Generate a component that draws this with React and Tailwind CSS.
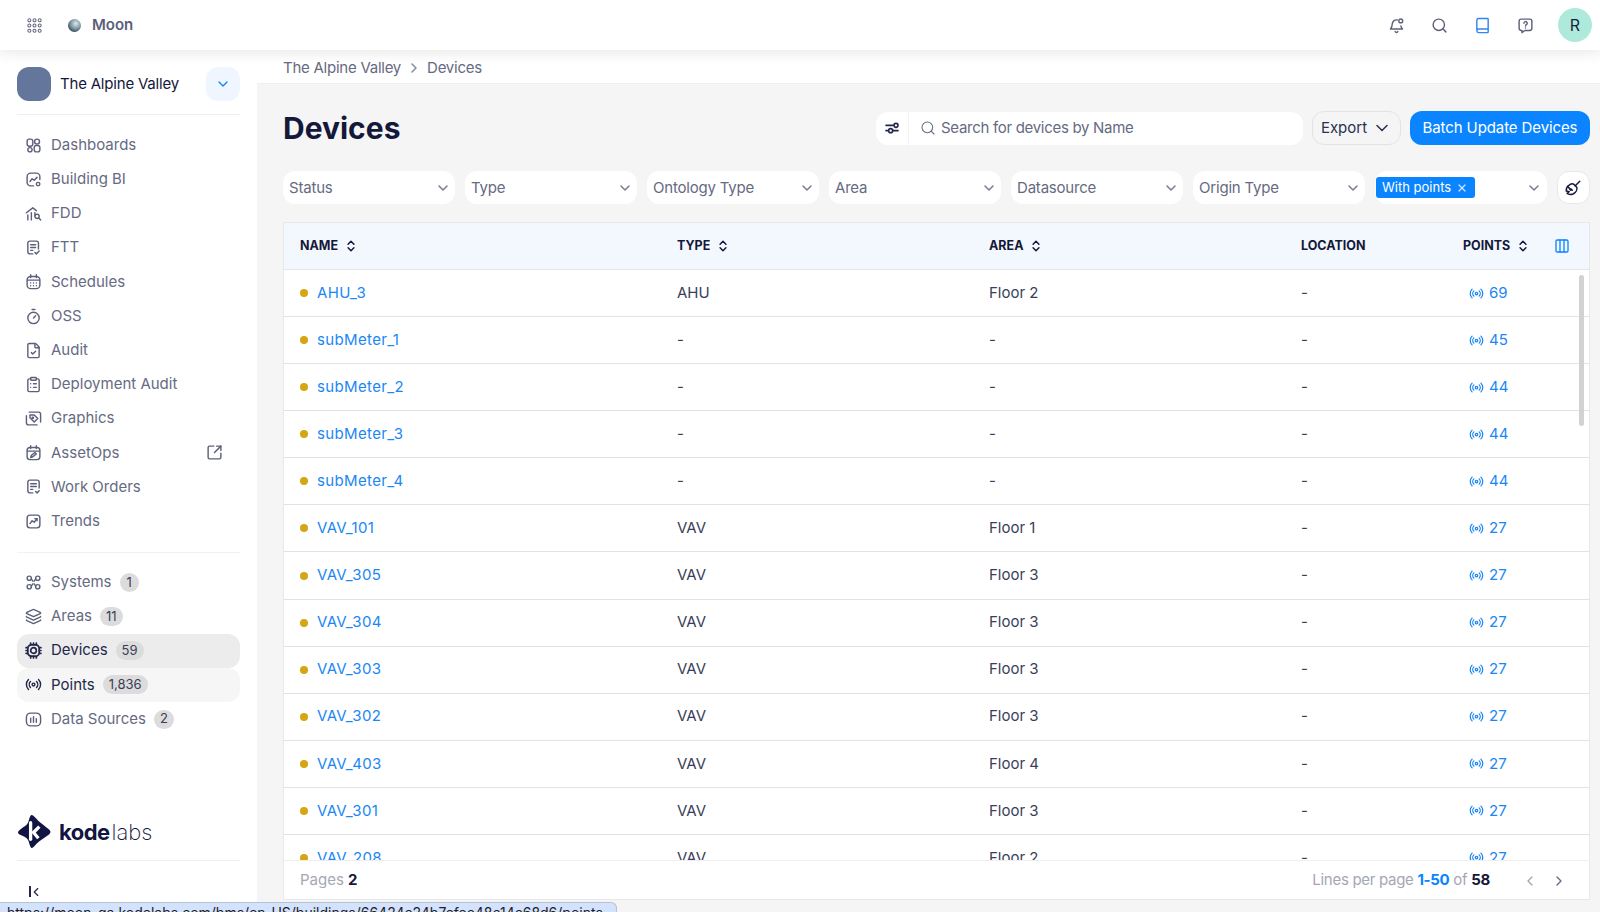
import {
  Book,
  ChevronDown,
  ChevronLeft,
  ChevronRight,
  ChevronsUpDown,
  ClipboardList,
  Columns3,
  FileCheck,
  Layers,
  Radio,
  Search,
  SquareArrowOutUpRight,
  Timer,
  X,
} from "lucide-react";

const svgProps = {
  viewBox: "0 0 24 24",
  fill: "none",
  stroke: "currentColor",
  strokeWidth: 2,
  strokeLinecap: "round",
  strokeLinejoin: "round",
};

const Dashboards = (p) => (
  <svg {...svgProps} {...p}>
    <rect x="3" y="3" width="8" height="10" rx="3" />
    <circle cx="17" cy="6.5" r="3.5" />
    <circle cx="7" cy="18" r="3" />
    <rect x="13" y="12" width="8" height="9" rx="3" />
  </svg>
);
const BuildingBi = (p) => (
  <svg {...svgProps} {...p}>
    <path d="M12 21H8a5 5 0 0 1-5-5V8a5 5 0 0 1 5-5h8a5 5 0 0 1 5 5v4" />
    <path d="M7 15l3-4 3 2 4-4" />
    <circle cx="18.5" cy="18.5" r="2.5" />
  </svg>
);
const Fdd = (p) => (
  <svg {...svgProps} {...p}>
    <path d="M2 11l9-7 5 4" />
    <path d="M4 14v7M9 11v10M14 11v4" />
    <circle cx="17" cy="16" r="3" />
    <path d="M19.5 18.5L22 21" />
  </svg>
);
const Ftt = (p) => (
  <svg {...svgProps} {...p}>
    <path d="M11 21H7a3 3 0 0 1-3-3V6a3 3 0 0 1 3-3h9a3 3 0 0 1 3 3v8" />
    <path d="M8 8h7M8 12h7M8 16h3" />
    <path d="M14 19l2 2 4-4" />
  </svg>
);
const Schedules = (p) => (
  <svg {...svgProps} {...p}>
    <rect x="3" y="5" width="18" height="17" rx="5" />
    <path d="M8 2.5v4M16 2.5v4M3.5 10h17" />
    <path d="M8 14h.01M12 14h.01M16 14h.01M8 18h.01M12 18h.01M16 18h.01" />
  </svg>
);
const Graphics = (p) => (
  <svg {...svgProps} {...p}>
    <path d="M6 3h13a3 3 0 0 1 3 3v11" />
    <path d="M2 8v10a3 3 0 0 0 3 3h12" />
    <path d="M7 7h6l5 5-5 5-6-6z" />
    <circle cx="11" cy="11" r="1" />
  </svg>
);
const AssetOps = (p) => (
  <svg {...svgProps} {...p}>
    <rect x="3" y="5" width="18" height="17" rx="4" />
    <path d="M8 2.5v4M16 2.5v4M3.5 10h17" />
    <path d="M8 19l1-3 5-4 2 2-5 4z" />
  </svg>
);
const WorkOrders = (p) => (
  <svg {...svgProps} {...p}>
    <path d="M11 21H7a3 3 0 0 1-3-3V6a3 3 0 0 1 3-3h10a3 3 0 0 1 3 3v8" />
    <path d="M8 8h8M8 12h8M8 16h3" />
    <path d="M15 19l2 2 3-3" />
  </svg>
);
const Trends = (p) => (
  <svg {...svgProps} {...p}>
    <rect x="3" y="3" width="18" height="18" rx="4" />
    <path d="M7 15l3-4 3 2 4-5" />
    <path d="M14 8h3v3" />
  </svg>
);
const Systems = (p) => (
  <svg {...svgProps} {...p}>
    <circle cx="6" cy="6" r="3" />
    <circle cx="18" cy="6" r="3" />
    <circle cx="6" cy="18" r="3" />
    <circle cx="18" cy="18" r="3" />
    <path d="M9 7l2 3M15 7l-2 3M9 17l2-3M15 17l-2-3" />
  </svg>
);
const Cpu = (p) => (
  <svg {...svgProps} strokeWidth={2.4} {...p}>
    <rect x="4" y="4" width="16" height="16" rx="5" />
    <circle cx="12" cy="12" r="4" />
    <path d="M8 1.5v2M12 1.5v2M16 1.5v2M8 20.5v2M12 20.5v2M16 20.5v2M1.5 8h2M1.5 12h2M1.5 16h2M20.5 8h2M20.5 12h2M20.5 16h2" />
  </svg>
);
const DataSources = (p) => (
  <svg {...svgProps} {...p}>
    <rect x="2" y="3" width="20" height="18" rx="6" />
    <path d="M8 10v6M12 8v8M16 11v5" />
  </svg>
);
const Grid9 = (p) => (
  <svg viewBox="0 0 16 16" fill="none" stroke="currentColor" strokeWidth="1.1" {...p}>
    {[2.5, 8, 13.5].map((y) =>
      [2.5, 8, 13.5].map((x) => <circle key={`${x}-${y}`} cx={x} cy={y} r="1.6" />)
    )}
  </svg>
);
const Sliders = (p) => (
  <svg {...svgProps} strokeWidth={2.4} {...p}>
    <path d="M3 8h11M3 16h3" />
    <circle cx="18" cy="8" r="3" />
    <circle cx="10" cy="16" r="3" />
    <path d="M13 16h8" />
  </svg>
);
const Broom = (p) => (
  <svg {...svgProps} {...p}>
    <path d="M21 3l-6 6" />
    <path d="M13 7l4 4c1 3-1 7-5 9-3 1-6 1-8-1l3-2-4-1c0-3 1-6 3-7 2-2 5-3 7-2z" />
    <path d="M9 13l2 2M6 11l3 4" />
  </svg>
);
const BellDot = (p) => (
  <svg {...svgProps} {...p}>
    <path d="M13 4.2A6 6 0 0 0 6 10c0 4-1.2 5.5-2.5 7h17c-1-1.2-1.9-2.3-2.3-4.5" />
    <path d="M10 20.5a2.2 2.2 0 0 0 4 0" />
    <circle cx="18" cy="5.5" r="2.7" />
  </svg>
);
const HelpChat = (p) => (
  <svg {...svgProps} {...p}>
    <path d="M6 3h12a3 3 0 0 1 3 3v10a3 3 0 0 1-3 3h-7l-4 3v-3H6a3 3 0 0 1-3-3V6a3 3 0 0 1 3-3z" />
    <path d="M9.8 8.8a2.3 2.3 0 1 1 3.4 2c-.8.5-1.2 1-1.2 1.8" />
    <path d="M12 15.6h.01" />
  </svg>
);
const KodeMark = (p) => (
  <svg viewBox="0 0 34 34" {...p}>
    <path
      d="M14 0c2 0 4 3 8 7l10 8c2 2 2 3 0 5l-10 7c-4 3-6 7-8 7-1 0-2-3-3-7-1-3-3-4-7-6-3-1-4-2-4-3s2-3 5-5c3-2 5-3 6-7 1-4 2-6 3-6z"
      fill="#121542"
    />
    <path d="M13 8v17" stroke="#fff" strokeWidth="3.4" strokeLinecap="round" />
    <path d="M22 12l-6 6 5 6" stroke="#fff" strokeWidth="3.4" fill="none" />
  </svg>
);

const mainNav = [
  { label: "Dashboards", icon: Dashboards },
  { label: "Building BI", icon: BuildingBi },
  { label: "FDD", icon: Fdd },
  { label: "FTT", icon: Ftt },
  { label: "Schedules", icon: Schedules },
  { label: "OSS", icon: Timer },
  { label: "Audit", icon: FileCheck },
  { label: "Deployment Audit", icon: ClipboardList },
  { label: "Graphics", icon: Graphics },
  { label: "AssetOps", icon: AssetOps, external: true },
  { label: "Work Orders", icon: WorkOrders },
  { label: "Trends", icon: Trends },
];

const subNav = [
  { label: "Systems", icon: Systems, count: "1" },
  { label: "Areas", icon: Layers, count: "11" },
  { label: "Devices", icon: Cpu, count: "59", state: "active" },
  { label: "Points", icon: Radio, count: "1,836", state: "hover" },
  { label: "Data Sources", icon: DataSources, count: "2" },
];

const filters = ["Status", "Type", "Ontology Type", "Area", "Datasource", "Origin Type"];

const devices = [
  ["AHU_3", "AHU", "Floor 2", "69"],
  ["subMeter_1", "-", "-", "45"],
  ["subMeter_2", "-", "-", "44"],
  ["subMeter_3", "-", "-", "44"],
  ["subMeter_4", "-", "-", "44"],
  ["VAV_101", "VAV", "Floor 1", "27"],
  ["VAV_305", "VAV", "Floor 3", "27"],
  ["VAV_304", "VAV", "Floor 3", "27"],
  ["VAV_303", "VAV", "Floor 3", "27"],
  ["VAV_302", "VAV", "Floor 3", "27"],
  ["VAV_403", "VAV", "Floor 4", "27"],
  ["VAV_301", "VAV", "Floor 3", "27"],
  ["VAV_208", "VAV", "Floor 2", "27"],
];

const NavItem = ({ item }) => {
  const Icon = item.icon;
  const strong = item.state === "active" || item.state === "hover";
  return (
    <div
      className={`h-[34.2px] flex items-center pl-[8px] pr-[17px] rounded-xl ${
        item.state === "active" ? "bg-[#ececec]" : item.state === "hover" ? "bg-[#f6f6f6]" : ""
      }`}
    >
      <Icon className={`w-[17px] h-[17px] shrink-0 ${strong ? "text-[#23274a]" : "text-[#5d6079]"}`} />
      <span className={`ml-[9px] text-[15px] ${strong ? "text-[#23274a]" : "text-[#666a82]"}`}>
        {item.label}
      </span>
      {item.count && (
        <span className="ml-2 h-[19px] min-w-[19px] px-[6px] flex items-center justify-center rounded-full bg-[#dcdcdc] text-[13px] text-[#3a3d57]">
          {item.count}
        </span>
      )}
      {item.external && (
        <SquareArrowOutUpRight className="ml-auto w-[17px] h-[17px] text-[#5d6079]" />
      )}
    </div>
  );
};

const HeaderCell = ({ label, sortable }) => (
  <div className="flex items-center gap-[6px] text-[12.5px] font-bold text-[#14183a]">
    {label}
    {sortable && <ChevronsUpDown className="w-[14px] h-[14px]" strokeWidth={2.6} />}
  </div>
);

const App = () => {
  return (
    <div
      className="h-screen w-full overflow-hidden flex flex-col bg-[#f5f5f5] relative"
      style={{ fontFamily: "Inter, 'Noto Sans', sans-serif" }}
    >
      {/* top bar */}
      <header className="h-[50px] shrink-0 bg-white flex items-center pl-[27px] pr-[8px] relative z-10 shadow-[0_2px_14px_rgba(0,0,0,0.1)]">
        <Grid9 className="w-[15px] h-[15px] text-[#62657d]" />
        <div className="ml-[26px] w-[13px] h-[13px] rounded-full bg-[radial-gradient(circle_at_60%_35%,#dfe9ec_0%,#7d97a3_45%,#1d3440_85%)]" />
        <span className="ml-[11px] text-[15px] font-semibold text-[#5b5f77]">Moon</span>
        <div className="ml-auto flex items-center">
          <BellDot className="w-[17px] h-[17px] text-[#5d6079]" />
          <Search className="ml-[26px] w-[17px] h-[17px] text-[#5d6079]" />
          <Book className="ml-[26px] w-[17px] h-[17px] text-[#2f86f0]" />
          <HelpChat className="ml-[26px] w-[17px] h-[17px] text-[#5d6079]" />
          <div className="ml-[24px] w-[34px] h-[34px] rounded-full bg-[#aeeadb] flex items-center justify-center text-[16px] text-[#1a1e3e]">
            R
          </div>
        </div>
      </header>

      <div className="flex-1 flex min-h-0">
        {/* sidebar */}
        <aside className="w-[257px] shrink-0 bg-white flex flex-col px-[17px] pt-[17px]">
          <div className="flex items-center pb-[13px] border-b border-[#eeeeee]">
            <div className="w-[34px] h-[34px] rounded-xl bg-[#64769b]" />
            <span className="ml-[9px] text-[15px] tracking-[-0.2px] text-[#14183a] pt-[1px]">
              The Alpine Valley
            </span>
            <div className="ml-auto w-[34px] h-[34px] rounded-xl bg-[#f0f6ff] flex items-center justify-center">
              <ChevronDown className="w-4 h-4 text-[#0a84ff]" />
            </div>
          </div>
          <nav className="mt-[13px] pb-[14px] border-b border-[#f2f2f2]">
            {mainNav.map((item) => (
              <NavItem key={item.label} item={item} />
            ))}
          </nav>
          <nav className="mt-[12px]">
            {subNav.map((item) => (
              <NavItem key={item.label} item={item} />
            ))}
          </nav>
          <div className="mt-auto">
            <div className="flex items-center pb-[12px] pl-[1px] border-b border-[#eeeeee]">
              <KodeMark className="w-[33px] h-[33px]" />
              <span className="ml-[8px] text-[22px] leading-none font-bold text-[#121542] tracking-tight">
                kode
              </span>
              <span className="ml-[2px] text-[22px] leading-none font-extralight text-[#121542]">
                labs
              </span>
            </div>
            <div className="h-[51px] flex items-start pt-[25px] pl-[12px]">
              <div className="w-[2px] h-[11px] bg-[#23274a]" />
              <ChevronLeft className="w-[14px] h-[14px] -ml-[2px] -mt-[1px] text-[#23274a]" />
            </div>
          </div>
        </aside>

        {/* main */}
        <main className="flex-1 min-w-0 flex flex-col">
          <div className="h-[34px] shrink-0 bg-white border-b border-[#efefef] flex items-center pl-[26px] pt-[3px] text-[15px] tracking-[-0.25px] text-[#666a82]">
            The Alpine Valley
            <ChevronRight className="mx-[5px] w-4 h-4 text-[#8b8ea0]" strokeWidth={2.4} />
            Devices
          </div>

          <div className="flex-1 min-h-0 flex flex-col pl-[26px] pr-[10px] pb-[12px]">
            <div className="mt-[27px] h-[34px] flex items-center">
              <h1 className="text-[30px] font-bold text-[#14183a]">Devices</h1>
              <div className="ml-auto w-[427px] h-[33px] bg-white rounded-xl flex items-center">
                <div className="w-[33px] h-full flex items-center justify-center border-r border-[#f3f3f3]">
                  <Sliders className="w-[16px] h-[16px] text-[#23274a]" />
                </div>
                <Search className="ml-[11px] w-[16px] h-[16px] text-[#666a82]" strokeWidth={1.6} />
                <span className="ml-[5px] text-[15px] tracking-[-0.3px] text-[#666a82]">
                  Search for devices by Name
                </span>
              </div>
              <button className="ml-[9px] w-[89px] h-[34px] rounded-xl border border-[#e3e3e3] flex items-center justify-center gap-[5px] text-[15px] text-[#2c3050]">
                Export
                <ChevronDown className="w-[20px] h-[20px]" strokeWidth={1.8} />
              </button>
              <button className="ml-[9px] w-[180px] h-[34px] rounded-xl bg-[#0a84ff] text-white text-[15px] tracking-[-0.1px]">
                Batch Update Devices
              </button>
            </div>

            <div className="mt-[26px] flex items-center gap-[10px]">
              {filters.map((name) => (
                <div
                  key={name}
                  className="w-[172px] h-[33px] bg-white rounded-xl flex items-center justify-between pl-[6px] pr-[4px] text-[15px] tracking-[-0.2px] text-[#666a82]"
                >
                  <span className="pt-[2px]">{name}</span>
                  <ChevronDown className="w-[16px] h-[16px] text-[#7c7f92]" strokeWidth={2.4} />
                </div>
              ))}
              <div className="w-[172px] h-[33px] bg-white rounded-xl flex items-center justify-between pr-[5px]">
                <span className="ml-[1px] h-[21px] w-[99px] px-[6px] rounded-[3px] bg-[#0a84ff] text-white text-[13px] flex items-center gap-[5px]">
                  With points
                  <X className="w-[12px] h-[12px] text-[#cfe6ff]" strokeWidth={2.4} />
                </span>
                <ChevronDown className="w-[16px] h-[16px] text-[#7c7f92]" strokeWidth={2.4} />
              </div>
              <div className="w-[33px] h-[33px] shrink-0 bg-white rounded-xl border border-[#e8e8e8] flex items-center justify-center">
                <Broom className="w-[18px] h-[18px] text-[#14183a] -ml-[2px]" />
              </div>
            </div>

            <div className="mt-[18px] flex-1 min-h-0 flex flex-col bg-white border border-[#e6e8ec] relative">
              <div className="h-[47px] shrink-0 bg-[#f3f8fe] border-b border-[#e2e6ec] grid grid-cols-[377px_312px_312px_162px_1fr] items-center pl-[16px]">
                <HeaderCell label="NAME" sortable />
                <HeaderCell label="TYPE" sortable />
                <HeaderCell label="AREA" sortable />
                <HeaderCell label="LOCATION" />
                <div className="flex items-center justify-between pr-[19px]">
                  <HeaderCell label="POINTS" sortable />
                  <Columns3 className="w-[16px] h-[16px] text-[#0a84ff]" />
                </div>
              </div>
              <div className="flex-1 min-h-0 overflow-hidden">
                {devices.map(([name, type, area, points]) => (
                  <div
                    key={name}
                    className="h-[47.08px] border-b border-[#e2e2e2] grid grid-cols-[377px_312px_312px_162px_1fr] items-center pl-[16px] text-[15px] text-[#3a3e5a]"
                  >
                    <div className="flex items-center">
                      <span className="w-[8px] h-[8px] rounded-full bg-[#d6a514]" />
                      <a className="ml-[9px] text-[#1a87f5] tracking-[0.35px]">{name}</a>
                    </div>
                    <div>{type}</div>
                    <div>{area}</div>
                    <div>-</div>
                    <div className="flex items-center gap-[5px] pl-[6px] text-[#1a87f5]">
                      <Radio className="w-[15px] h-[15px]" />
                      {points}
                    </div>
                  </div>
                ))}
              </div>
              <div className="h-[39px] shrink-0 bg-white border-t border-[#efefef] flex items-center pl-[16px] pr-[22px] pt-[1px] text-[15px] text-[#a5a7b5]">
                <span>
                  Pages <b className="text-[#14183a]">2</b>
                </span>
                <span className="ml-auto tracking-[-0.3px]">
                  Lines per page <b className="text-[#0a84ff]">1-50</b> of{" "}
                  <b className="text-[#14183a]">58</b>
                </span>
                <ChevronLeft className="ml-[32px] w-[16px] h-[16px] text-[#a5a7b5]" />
                <ChevronRight className="ml-[13px] w-[16px] h-[16px] text-[#666a82]" />
              </div>
              {/* scrollbar thumb */}
              <div className="absolute right-[5px] top-[52px] w-[5px] h-[151px] rounded-full bg-[#d2d2d4]" />
            </div>
          </div>
        </main>
      </div>

      {/* browser link preview */}
      <div className="absolute left-0 bottom-0 w-[617px] h-[10px] overflow-hidden bg-[#d3e3fd] border-t border-r border-[#b9c2cf] rounded-tr-md pl-[7px] text-[14px] leading-[19px] text-[#1f2024]">
        https://moon-qa.kodelabs.com/bms/en_US/buildings/66424c24b7efec48c14c68d6/points
      </div>
    </div>
  );
};

export default App;
